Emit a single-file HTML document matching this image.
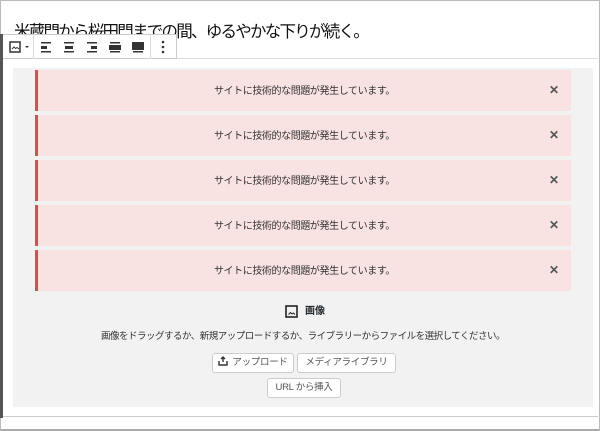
<!DOCTYPE html>
<html><head><meta charset="utf-8"><style>
*{margin:0;padding:0;box-sizing:border-box}
body{width:600px;height:431px;overflow:hidden;background:#fff;position:relative;font-family:"Liberation Sans","Noto Sans CJK JP",sans-serif;color:#23282d}
.abs{position:absolute}
.h{left:14px;top:20px;font-size:16.5px;letter-spacing:-1.75px;color:#111;white-space:nowrap;line-height:24px}
.tb{left:3px;top:34px;width:174px;height:25px;background:#fff;border:1px solid #ccc;border-left:none;display:flex;align-items:center}
.sep{width:1px;height:24px;background:#ddd}
.note{left:35px;width:536px;height:41px;background:#f9e2e2;border-left:3px solid #d94f4f;font-size:10px;letter-spacing:-0.4px;text-align:center;line-height:44px;color:#333}
.x{position:absolute;right:12px;top:-2px;font-size:12px;font-weight:bold;color:#555;letter-spacing:0}
.btn{height:20px;border:1px solid #ccc;background:#fff;border-radius:3px;font-size:9.5px;line-height:18px;text-align:center;color:#555;letter-spacing:-0.3px}
</style></head><body>
<div class="abs" style="left:0;top:0;width:600px;height:431px;border:1px solid #bbb;border-bottom:2px solid #aaa"></div>
<div class="abs h">米蔵門から桜田門までの間、ゆるやかな下りが続く。</div>
<div class="abs" style="left:0;top:34px;width:3px;height:384px;background:#555"></div>
<div class="abs" style="left:3px;top:58px;width:595px;height:1px;background:#ddd"></div>
<div class="abs" style="left:3px;top:416px;width:595px;height:1px;background:#ccc"></div>
<div class="abs" style="left:13px;top:68px;width:580px;height:339px;background:#f2f2f2"></div>
<div class="abs tb">
<svg width="30" height="24" viewBox="0 0 30 24"><rect x="7" y="7" width="10" height="10" fill="none" stroke="#333" stroke-width="1.5"/><path d="M9 14l2-2 1.5 1.5 1.5-1 2 1.5" stroke="#333" fill="none"/><path d="M22 11h4l-2 2z" fill="#333"/></svg>
<div class="sep"></div>
<svg width="116" height="24" viewBox="0 0 116 24"><g fill="#333"><rect x="7" y="7" width="10" height="1.5"/><rect x="7" y="11" width="6" height="3"/><rect x="7" y="16" width="10" height="1.5"/>
<rect x="30" y="7" width="10" height="1.5"/><rect x="31" y="11" width="8" height="3"/><rect x="30" y="16" width="10" height="1.5"/>
<rect x="53" y="7" width="10" height="1.5"/><rect x="57" y="11" width="6" height="3"/><rect x="53" y="16" width="10" height="1.5"/>
<rect x="76" y="7" width="10" height="1.5"/><rect x="75" y="10" width="12" height="5"/><rect x="76" y="16" width="10" height="1.5"/>
<rect x="98" y="7" width="12" height="8"/><rect x="99" y="16" width="10" height="1.5"/></g></svg>
<div class="sep"></div>
<svg width="24" height="24" viewBox="0 0 24 24"><g fill="#333"><circle cx="12" cy="7" r="1.3"/><circle cx="12" cy="12" r="1.3"/><circle cx="12" cy="17" r="1.3"/></g></svg>
</div>
<div class="abs note" style="top:70px">サイトに技術的な問題が発生しています。<span class="x">✕</span></div>
<div class="abs note" style="top:115px">サイトに技術的な問題が発生しています。<span class="x">✕</span></div>
<div class="abs note" style="top:160px">サイトに技術的な問題が発生しています。<span class="x">✕</span></div>
<div class="abs note" style="top:205px">サイトに技術的な問題が発生しています。<span class="x">✕</span></div>
<div class="abs note" style="top:250px">サイトに技術的な問題が発生しています。<span class="x">✕</span></div>
<svg class="abs" style="left:285px;top:305px" width="13" height="13" viewBox="0 0 13 13"><rect x="1" y="1" width="11" height="11" fill="none" stroke="#222" stroke-width="1.6"/><path d="M3.5 9.5l2-2 1.5 1.5 1.5-1 1.5 1.5" stroke="#222" fill="none"/></svg>
<div class="abs" style="left:305px;top:304px;font-size:10px;font-weight:bold;line-height:16px">画像</div>
<div class="abs" style="left:13px;width:580px;top:330px;font-size:9.5px;letter-spacing:-0.5px;text-align:center;line-height:14px;color:#333">画像をドラッグするか、新規アップロードするか、ライブラリーからファイルを選択してください。</div>
<div class="abs btn" style="left:212px;top:353px;width:82px"><svg width="10" height="10" viewBox="0 0 10 10" style="vertical-align:-1px;margin-right:4px"><path d="M5 1v5M3 3l2-2 2 2M1 5v4h8V5" stroke="#333" stroke-width="1.4" fill="none"/></svg>アップロード</div>
<div class="abs btn" style="left:297px;top:353px;width:99px">メディアライブラリ</div>
<div class="abs btn" style="left:267px;top:378px;width:74px">URL から挿入</div>
</body></html>
